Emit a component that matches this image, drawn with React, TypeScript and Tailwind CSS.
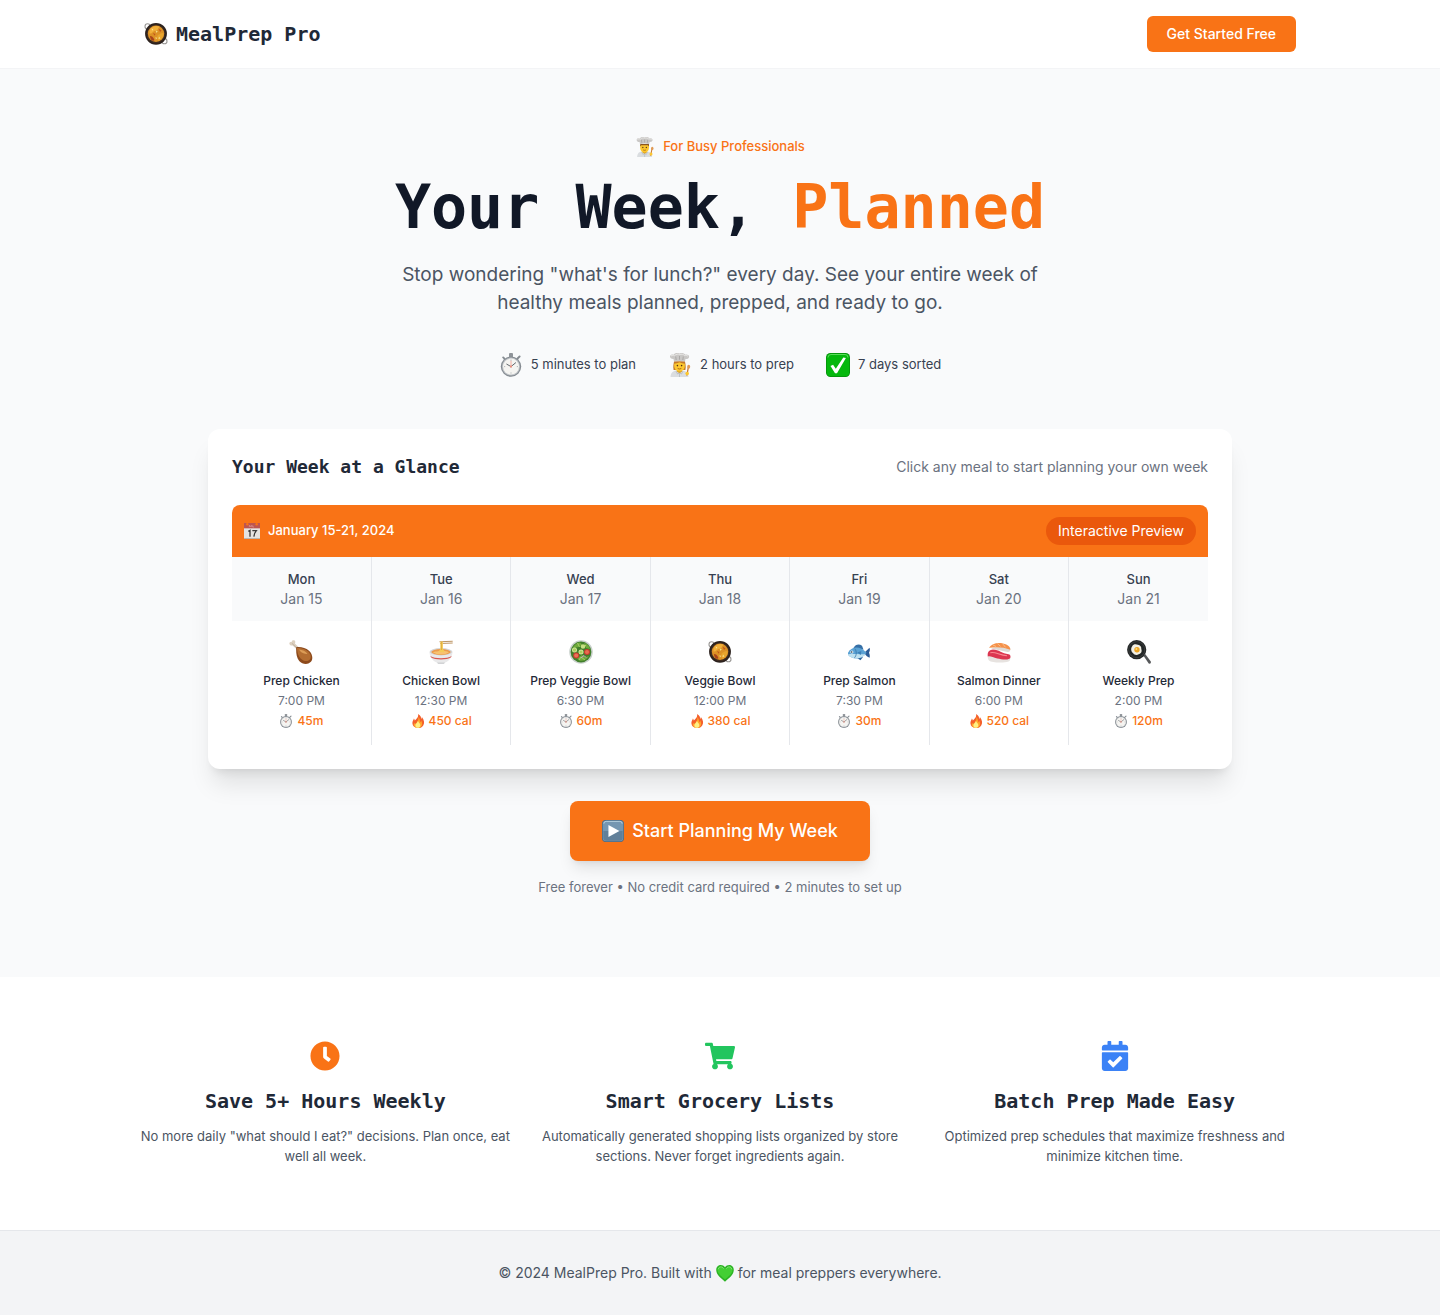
import type { ReactNode } from 'react';
import { FaCalendarCheck, FaClock, FaShoppingCart } from 'react-icons/fa';

type IconProps = { className?: string };

function Icon({ className = 'size-6', children }: IconProps & { children: ReactNode }) {
  return (
    <svg viewBox="0 0 24 24" aria-hidden="true" className={`${className} shrink-0`}>
      {children}
    </svg>
  );
}

function Paella({ className }: IconProps) {
  return (
    <Icon className={className}>
      <circle cx="3.6" cy="4.4" r="2.6" fill="none" stroke="#9a9896" strokeWidth="1.1" />
      <circle cx="20.4" cy="19.2" r="2.6" fill="none" stroke="#9a9896" strokeWidth="1.1" />
      <circle cx="12" cy="11.8" r="10.9" fill="#2b211d" />
      <circle cx="12" cy="11.8" r="9.4" fill="#3f2c20" />
      <circle cx="12" cy="11.8" r="8.2" fill="#dc9125" />
      <path d="M5.500 8.500c2-4 7-5.500 10-3.600-2 1.600-1 3.100-4 3.600s-3 3.500-6 3z" fill="#f2b03a" />
      <path d="M14 13c2-1 4-3 5.500-1.500.5 3-2 6.500-5 7.500-1-2-2-4-.5-6z" fill="#e9a52c" />
      <path d="M6 14c2 0 3 1 4 3s-1 2-2 1.500S6 16 6 14z" fill="#a8431a" />
      <path d="M14.500 6.500l3 2-1.500 1.500z M9 11l2.500 1-1 1.800z" fill="#c2571c" />
      <path d="M11.500 8.500l2.200.6-1 2z M7.500 6.500l1.800.8-1 1.400z M15 14.500l1.500 2-2 .5z M11.500 15l1.600 1-1.200 1.400z" fill="#f8e08c" />
    </Icon>
  );
}

function Chef({ className, longHair = false }: IconProps & { longHair?: boolean }) {
  return (
    <Icon className={className}>
      {longHair && <path d="M6 8.500h11c.6 3 1 5.500.4 8.500H5.600C5 14 5.400 11.500 6 8.500z" fill="#c07a2c" />}
      <path d="M2.500 24c.2-4 2.200-6 5.500-6.500h7c3.500.5 5.300 2.500 5.500 6.500z" fill="#dadde0" />
      <path d="M9 16h5v2.600l-2.500 1.700L9 18.600z" fill="#d99d1d" />
      <path d="M11.500 20.300V24M8 18l1.500 3 2-1 2 1 1.500-3" fill="none" stroke="#b0b5ba" strokeWidth=".7" />
      <path d="M6.200 9h10.600v3.800c0 3.400-2.400 5.800-5.300 5.800s-5.300-2.400-5.300-5.800z" fill="#fcc72f" />
      {!longHair && <path d="M6.200 8.500h10.600v2.800l-1.300-1.300H7.500l-1.300 1.300z" fill="#8b5520" />}
      {longHair && <path d="M6 8.500h11v2.200c-2-.2-4-.6-5.500-1.500-1.500.9-3.500 1.300-5.500 1.500z" fill="#c67926" />}
      <circle cx="9.400" cy="12.600" r=".8" fill="#533118" />
      <circle cx="13.600" cy="12.600" r=".8" fill="#533118" />
      <path d="M9.700 15.500q1.800 1 3.600 0" fill="none" stroke="#9a5413" strokeWidth=".8" />
      <path d="M6 8.600L5.500 6C3.500 6.200 1.700 5 2 3.200 2.300 1.700 4.200 1.200 5.800 1.700 7-.1 10-.2 11.500.5c2-.8 4.700-.4 5.700 1.200 1.800-.5 3.700.2 3.900 1.700.2 1.700-1.600 2.800-3.600 2.600L17 8.600q-5.500-1.400-11 0z" fill="#c9c7c5" />
      <path d="M3 3c1.500-1 2.500-.8 3.500-.3C8 .9 10.500 1 11.700 1.500c1.700-.6 3.800-.3 4.800 1 1.500-.3 2.800 0 3.600 1" fill="none" stroke="#e9e8e6" strokeWidth="1" />
      <path d="M7.700 3.500l.5 3.500M11.500 3v3.700M15.300 3.500l-.5 3.500" stroke="#9c9997" strokeWidth=".7" />
      <path d="M20.500 13.500l-1.700 9" stroke="#c9772e" strokeWidth="1.300" />
      <ellipse cx="20.700" cy="13.700" rx="1.500" ry="2" fill="#e09a55" />
      <circle cx="19.200" cy="20.500" r="1.800" fill="#fcc72f" />
    </Icon>
  );
}

function Stopwatch({ className }: IconProps) {
  return (
    <Icon className={className}>
      <rect x="10" y="0" width="4" height="4.500" rx="1" fill="#8f9499" />
      <path d="M18.300 5.700l2.300-2.200M5.400 5.600L4.200 4.400" stroke="#858b91" strokeWidth="1.900" strokeLinecap="round" />
      <circle cx="12" cy="13.600" r="10.200" fill="#858b91" />
      <circle cx="12" cy="13.600" r="9" fill="#bfc3c7" />
      <circle cx="12" cy="13.600" r="8" fill="#f5f4f1" />
      <path d="M12 6.600v1.200M12 19.400v1.200M5 13.600h1.200M17.800 13.600H19" stroke="#8c9196" strokeWidth=".6" />
      <path d="M12 13.600L7.800 11.200M12 13.600l4.600-3.800" stroke="#50565c" strokeWidth=".9" strokeLinecap="round" />
      <path d="M12 14.600V7.800" stroke="#f0a093" strokeWidth=".8" />
      <circle cx="12" cy="13.600" r="1" fill="#f08c7b" />
    </Icon>
  );
}

function CheckBox({ className }: IconProps) {
  return (
    <Icon className={className}>
      <rect width="24" height="24" rx="4.500" fill="#078c0c" />
      <rect x=".7" y=".7" width="22.600" height="22.600" rx="4" fill="#05b80d" />
      <path d="M2 4.500Q2 1.500 5 1.500h14q3 0 3 3" fill="none" stroke="#59dd59" strokeWidth="1" />
      <path d="M4.500 13l2.600-1.200 2.700 4L17.300 4.500l2.600.6L11 20.200H9z" fill="#fff" />
    </Icon>
  );
}

function CalendarPage({ className }: IconProps) {
  return (
    <Icon className={className}>
      <path d="M0 0h24v24H0z" fill="#e5e3e1" />
      <path d="M0 0h24v8H0z" fill="#bd5550" />
      <path d="M0 22.500h24V24H0z" fill="#b9b6b3" />
      <circle cx="5" cy="1.800" r="1.800" fill="#f97316" />
      <circle cx="19" cy="1.800" r="1.800" fill="#f97316" />
      <path d="M8 6V3.500l1.500 2L11 3.500V6M13 3.500V6h2" fill="none" stroke="#e4aaa7" strokeWidth=".8" />
      <path d="M6.500 12.500L9 11v9.500M12.500 11.500h6c-2.500 3-3.500 6-3.700 9" fill="none" stroke="#3c3b3b" strokeWidth="2" />
    </Icon>
  );
}

function Drumstick({ className }: IconProps) {
  return (
    <Icon className={className}>
      <path d="M8 9.500L3.600 5.400C2 6 .2 4.800.4 3.200.5 2 1.700 1.700 2.700 2 2.600.6 3.900-.2 5.100.3c1.400.5 1.500 2.200.8 3.100L10.500 8z" fill="#dccfbd" />
      <path d="M3 3.400l5 4.800" stroke="#a99b88" strokeWidth=".6" />
      <path d="M7.200 7.200c4-.7 9.300.3 12.800 3.600 3.800 3.500 4.300 8.600 1.600 11.300-3 2.900-8.300 2.300-11.400-1.200C7.300 17.600 7 12 7.200 7.200z" fill="#8d4a1c" />
      <path d="M8 8c4-.4 8.200.7 11.200 3.500 2.800 2.700 3.300 6.200 1.400 8.200-2.200 2.300-6.300 1.500-9-1.300C9 15.600 8.200 12 8 8z" fill="#b36d31" />
      <path d="M10 9.500c3.500.3 7 1.800 8.500 4.500-3 0-6.500-1-8.500-4.500z" fill="#db9c56" />
    </Icon>
  );
}

function Noodles({ className }: IconProps) {
  return (
    <Icon className={className}>
      <path d="M10.500 1.200L23.700.8v1L10.500 2.300zM11 3l12.700-.5v1L11 4z" fill="#bd9564" />
      <ellipse cx="12" cy="12" rx="11.500" ry="3.900" fill="#d4d5d7" />
      <path d="M.5 12c0 5 3.500 9 7 10.500h9c3.500-1.500 7-5.500 7-10.500-3 5-20 5-23 0z" fill="#e9e9ea" />
      <ellipse cx="12" cy="12" rx="9.700" ry="2.900" fill="#eb9b4c" />
      <path d="M4 12.500c2-2 4-.5 6-1.500s5 .2 7 .3 2 1 3 1.200c-4 2.500-12 2.500-16 0z" fill="#f7c270" />
      <path d="M11.300 1.500h2.600v7c.2 1.800 1.600 1.800 1.600 3.500H10c0-1.700 1.300-1.900 1.300-3.500z" fill="#f3cb58" />
      <path d="M12.500 2v8" stroke="#d89f31" strokeWidth=".6" />
      <path d="M1.400 16c4 3 17.200 3 21.200 0l-.5 1.200c-4 3-16.200 3-20.200 0z" fill="#d8574f" />
      <path d="M8 22.500h8l-1 1.200H9z" fill="#c3c5c7" />
    </Icon>
  );
}

function Salad({ className }: IconProps) {
  return (
    <Icon className={className}>
      <circle cx="12" cy="12" r="11.800" fill="#c9d1cc" />
      <circle cx="12" cy="12" r="10.400" fill="#417f2b" />
      <path d="M3 10c1-4 4-7 8-7.500l2 2c-2 1-3 3-6 3l-1 3zM15 3c3 .5 6 4 6 6l-4-1zM8 18l5-3 4 2 3-1c-2 4-6 5.500-10 4.500z" fill="#6faa3b" />
      <path d="M8.500 3l2 4M17 5l-3 3M10 20l2-3 4 3" stroke="#a6ce66" strokeWidth="1" fill="none" />
      <circle cx="5.500" cy="10" r="2.500" fill="#d6e7a0" />
      <circle cx="5.500" cy="10" r="1.700" fill="#a9d05f" />
      <circle cx="14" cy="6.500" r="2.300" fill="#c6df81" />
      <circle cx="12" cy="12" r="2.500" fill="#d1e69b" />
      <circle cx="12" cy="12" r="1.600" fill="#a8d05e" />
      <circle cx="18" cy="12" r="3" fill="#c93b2e" />
      <circle cx="18" cy="12" r="2" fill="#e96d50" />
      <circle cx="7.200" cy="15.500" r="3" fill="#cc3c2f" />
      <circle cx="7.200" cy="15.500" r="2" fill="#ea7356" />
      <path d="M12 18l3-2.500 2 2" fill="none" stroke="#c7aaca" strokeWidth="1" />
    </Icon>
  );
}

function Fish({ className }: IconProps) {
  return (
    <Icon className={className}>
      <path d="M6.500 8C8.500 4.200 12 3.700 15 5.700l1.500 4z" fill="#356fa6" />
      <path d="M17.500 12.500l5-4.700c.8 1.400.3 3.400-.5 5 .8 1.700 1 3.400.6 5-2.100-.6-3.500-2.300-5.100-4z" fill="#2c5b96" />
      <path d="M10 18l3.500 2.300L16 17z" fill="#2d649d" />
      <path d="M1 12.700C4 6.500 13 5 19.500 12.800 15.500 19.300 6 20.500 1 14.700z" fill="#5ba2d4" />
      <path d="M1 14.200c5-.7 12.500.5 17.700-.3C14 19.500 5.500 20 1 14.700z" fill="#bfe1f0" />
      <path d="M7.800 8.700c2 2.500 2 6.500-.3 9.100" fill="none" stroke="#3c79ac" strokeWidth=".9" />
      <path d="M10.300 12.500l4-1.500-.5 4z" fill="#3e80b7" />
      <circle cx="4.900" cy="12" r="1.500" fill="#f8fafb" />
      <circle cx="4.700" cy="12" r=".8" fill="#182d40" />
    </Icon>
  );
}

function Sushi({ className }: IconProps) {
  return (
    <Icon className={className}>
      <path d="M4 8.500l16.500 3.500c2 .2 3-1 3-3.500l-10-3z" fill="#ded9d4" />
      <path d="M2 7.700C4.500 3.700 10 2.200 16 3.400c5 .9 7.500 3.500 7.300 6.300C17 6.900 9 6.700 2 7.700z" fill="#f5914a" />
      <path d="M6 5l3 1.400M10.500 3.700l3 2.600M15.500 3.600l3 3.700" stroke="#fac28d" strokeWidth=".9" />
      <path d="M.8 15.500c-.4 4 .8 5.500 4 6.200 6 1.200 12.700 1.300 16.700-.2 1.500-.6 2-2 1.800-4.500z" fill="#e7e3e0" />
      <path d="M.8 16.500c-.7-4 1.500-6.800 5.200-6.900 6 0 9 4.100 15.500 4.700 2.300.4 2.700 3.400.8 4.400-3 1.600-8 .6-12-.2-4.500-1-6.700-2.800-9.500-2z" fill="#dc3650" />
      <path d="M3.300 12.700c4.700-1.500 8.700 2.300 16.700 3" fill="none" stroke="#fa8790" strokeWidth="1.100" />
    </Icon>
  );
}

function FryingPan({ className }: IconProps) {
  return (
    <Icon className={className}>
      <path d="M16.500 15.700l1.700-1.600 5.600 7.400c.5 1.500-.7 2.600-2.100 2z" fill="#56585a" />
      <circle cx="9.700" cy="9.700" r="9.600" fill="#252828" />
      <circle cx="9.700" cy="9.700" r="8.300" fill="#434545" />
      <circle cx="9.700" cy="9.700" r="7.600" fill="#222626" />
      <path d="M5.200 6.200C6.200 3.800 9.300 4 11 4.800c2.200.5 3.700 2.200 3.300 4.200 1 2.500-.3 4.800-2.600 5.200-2 1.300-4.600.6-5.500-1C3.800 11.600 3.700 8 5.200 6.200z" fill="#f2efe4" />
      <circle cx="10" cy="9.800" r="2.700" fill="#eba324" />
      <circle cx="9.400" cy="9" r="1" fill="#ffd970" />
    </Icon>
  );
}

function Fire({ className }: IconProps) {
  return (
    <Icon className={className}>
      <path d="M12 0c5 3 5.500 6 5.200 8.500 1-.8 1.600-1.800 1.500-3.300 4 5.500 4.800 10 2.500 14-2 3.500-5 4.800-9.200 4.800-5.500 0-9.300-3-9.600-8C2.200 12.500 4 10.500 5 7.500c1 1 1.400 2.200 1.400 3.700C9.500 8.500 13.500 5 12 0z" fill="#f4602b" />
      <path d="M12.800 5c3 4 2.500 7.500 3 9 1-.8 1.500-1.700 1.500-3 3.500 5.500 2 12.500-5.300 12.800-6 0-8.600-4.600-6.500-9 .7.7 1 1.500 1.200 2.500 3.500-2 6.500-6 6.100-12.300z" fill="#ffa62b" />
      <path d="M12 11.500c.3 3 4.300 4.500 4.100 8-.2 2.900-2 4.200-4.200 4.200-2.700 0-4.500-1.800-4.400-4.500.1-3 3.700-4 4.500-7.700z" fill="#fff084" />
    </Icon>
  );
}

function PlayTile({ className }: IconProps) {
  return (
    <Icon className={className}>
      <rect width="24" height="24" rx="4" fill="#4b6984" />
      <rect x=".8" y=".8" width="22.400" height="22.400" rx="3.500" fill="#7596b1" />
      <path d="M2 4q0-2.500 2.500-2.500h15Q22 1.500 22 4" fill="none" stroke="#b9d3e3" strokeWidth="1" />
      <path d="M1.500 12h21v7q0 3.500-3.500 3.500H5q-3.500 0-3.500-3.500z" fill="#628099" />
      <path d="M7 5.500L19 12 7 18.500z" fill="#fff" />
    </Icon>
  );
}

function GreenHeart({ className }: IconProps) {
  return (
    <Icon className={className}>
      <path d="M12 23.500C7.500 19.500.3 15 .3 7.600.3 1 8.500-.9 12 4.400c3.500-5.300 11.700-3.400 11.700 3.200 0 7.400-7.200 11.900-11.700 15.900z" fill="#2bb324" />
      <path d="M12 20.500C8 17 2 13.500 2 7.800 2 3.200 8.500 2.200 12 7c3.500-4.800 10-3.800 10 .8 0 5.700-6 9.200-10 12.700z" fill="#43cf34" />
      <path d="M3 7C4 2.800 8 3 10.500 6.200M13.500 6.200C16 3 20 2.800 21 7" fill="none" stroke="#8be87c" strokeWidth="1.300" />
    </Icon>
  );
}

const stats = [
  { icon: <Stopwatch />, label: '5 minutes to plan' },
  { icon: <Chef longHair />, label: '2 hours to prep' },
  { icon: <CheckBox />, label: '7 days sorted' },
];

const week = [
  { day: 'Mon', date: 'Jan 15', icon: <Drumstick />, meal: 'Prep Chicken', time: '7:00 PM', kind: 'time', note: '45m' },
  { day: 'Tue', date: 'Jan 16', icon: <Noodles />, meal: 'Chicken Bowl', time: '12:30 PM', kind: 'cal', note: '450 cal' },
  { day: 'Wed', date: 'Jan 17', icon: <Salad />, meal: 'Prep Veggie Bowl', time: '6:30 PM', kind: 'time', note: '60m' },
  { day: 'Thu', date: 'Jan 18', icon: <Paella />, meal: 'Veggie Bowl', time: '12:00 PM', kind: 'cal', note: '380 cal' },
  { day: 'Fri', date: 'Jan 19', icon: <Fish />, meal: 'Prep Salmon', time: '7:30 PM', kind: 'time', note: '30m' },
  { day: 'Sat', date: 'Jan 20', icon: <Sushi />, meal: 'Salmon Dinner', time: '6:00 PM', kind: 'cal', note: '520 cal' },
  { day: 'Sun', date: 'Jan 21', icon: <FryingPan />, meal: 'Weekly Prep', time: '2:00 PM', kind: 'time', note: '120m' },
];

const features = [
  {
    icon: <FaClock className="size-[30px] text-[#f97316]" />,
    title: 'Save 5+ Hours Weekly',
    text: 'No more daily "what should I eat?" decisions. Plan once, eat well all week.',
  },
  {
    icon: <FaShoppingCart className="size-[30px] text-[#22c55e]" />,
    title: 'Smart Grocery Lists',
    text: 'Automatically generated shopping lists organized by store sections. Never forget ingredients again.',
  },
  {
    icon: <FaCalendarCheck className="size-[30px] text-[#3b82f6]" />,
    title: 'Batch Prep Made Easy',
    text: 'Optimized prep schedules that maximize freshness and minimize kitchen time.',
  },
];

export default function App() {
  return (
    <div className="min-h-screen bg-white font-['Inter',sans-serif] text-[#1f2937]">
      <header className="border-b border-[#f3f4f6] px-6">
        <div className="mx-auto flex max-w-6xl items-center justify-between py-4">
          <div className="flex items-center gap-2">
            <Paella />
            <span className="font-['DejaVu_Sans_Mono',monospace] text-xl font-bold">MealPrep Pro</span>
          </div>
          <button className="h-9 rounded-md bg-[#f97316] px-5 text-sm font-medium text-white">
            Get Started Free
          </button>
        </div>
      </header>

      <main>
        <section className="flex flex-col items-center bg-[#f9fafb] px-6 pt-16 pb-20">
          <div className="mb-4 flex h-7 items-center gap-2 text-[13px] font-medium text-[#f97316]">
            <Chef className="size-5" />
            For Busy Professionals
          </div>
          <h1 className="text-center font-['DejaVu_Sans_Mono',monospace] text-6xl leading-[60px] font-bold text-[#111827]">
            Your Week, <span className="text-[#f97316]">Planned</span>
          </h1>
          <p className="mt-6 max-w-2xl text-center text-[19px] leading-7 text-[#4b5563]">
            Stop wondering "what's for lunch?" every day. See your entire week of healthy meals planned, prepped, and
            ready to go.
          </p>
          <ul className="mt-8 flex flex-wrap justify-center gap-8 text-[13px] text-[#374151]">
            {stats.map((s) => (
              <li key={s.label} className="flex h-8 items-center gap-2">
                {s.icon}
                {s.label}
              </li>
            ))}
          </ul>

          <div className="mt-12 w-full max-w-5xl rounded-xl bg-white p-6 shadow-xl">
            <div className="mb-6 flex items-center justify-between">
              <h2 className="font-['DejaVu_Sans_Mono',monospace] text-lg leading-7 font-bold">Your Week at a Glance</h2>
              <p className="text-sm text-[#6b7280]">Click any meal to start planning your own week</p>
            </div>
            <div className="flex items-center justify-between rounded-t-lg bg-[#f97316] p-3 text-white">
              <div className="flex items-center gap-2 text-[13px] font-medium">
                <CalendarPage className="size-4" />
                January 15-21, 2024
              </div>
              <span className="rounded-full bg-[#ea580c] px-3 py-1 text-sm leading-5">Interactive Preview</span>
            </div>
            <table className="w-full table-fixed text-center">
              <thead>
                <tr className="bg-[#f9fafb]">
                  {week.map((d) => (
                    <th key={d.day} scope="col" className="border-r border-[#e5e7eb] py-3 last:border-r-0">
                      <div className="text-[13px] leading-5 font-medium text-[#374151]">{d.day}</div>
                      <div className="text-sm leading-5 font-normal text-[#6b7280]">{d.date}</div>
                    </th>
                  ))}
                </tr>
              </thead>
              <tbody>
                <tr>
                  {week.map((d) => (
                    <td key={d.day} className="border-r border-[#e5e7eb] p-0 last:border-r-0">
                      <button className="flex w-full flex-col items-center py-3.5 text-xs leading-5">
                        <span className="mb-0.5 flex h-[34px] items-center">{d.icon}</span>
                        <span className="font-medium text-[#1f2937]">{d.meal}</span>
                        <span className="text-[#6b7280]">{d.time}</span>
                        <span className="flex items-center gap-1 font-medium text-[#f97316]">
                          {d.kind === 'cal' ? <Fire className="size-3.5" /> : <Stopwatch className="size-3.5" />}
                          {d.note}
                        </span>
                      </button>
                    </td>
                  ))}
                </tr>
              </tbody>
            </table>
          </div>

          <button className="mt-8 flex h-[60px] items-center gap-2 rounded-lg bg-[#f97316] px-8 text-lg font-medium text-white shadow-lg">
            <PlayTile className="size-[22px]" />
            Start Planning My Week
          </button>
          <p className="mt-4 text-[13px] leading-5 text-[#6b7280]">
            Free forever • No credit card required • 2 minutes to set up
          </p>
        </section>

        <section className="px-6 py-16">
          <div className="mx-auto grid max-w-6xl gap-8 md:grid-cols-3">
            {features.map((f) => (
              <div key={f.title} className="flex flex-col items-center text-center">
                {f.icon}
                <h3 className="mt-4 font-['DejaVu_Sans_Mono',monospace] text-xl leading-7 font-bold">{f.title}</h3>
                <p className="-mx-2 mt-[11px] text-[13px] leading-5 text-[#4b5563]">{f.text}</p>
              </div>
            ))}
          </div>
        </section>
      </main>

      <footer className="border-t border-[#e5e7eb] bg-[#f3f4f6] px-6 py-8">
        <p className="flex items-center justify-center gap-1 text-sm leading-5 text-[#4b5563]">
          © 2024 MealPrep Pro. Built with <GreenHeart className="size-[18px]" /> for meal preppers everywhere.
        </p>
      </footer>
    </div>
  );
}
